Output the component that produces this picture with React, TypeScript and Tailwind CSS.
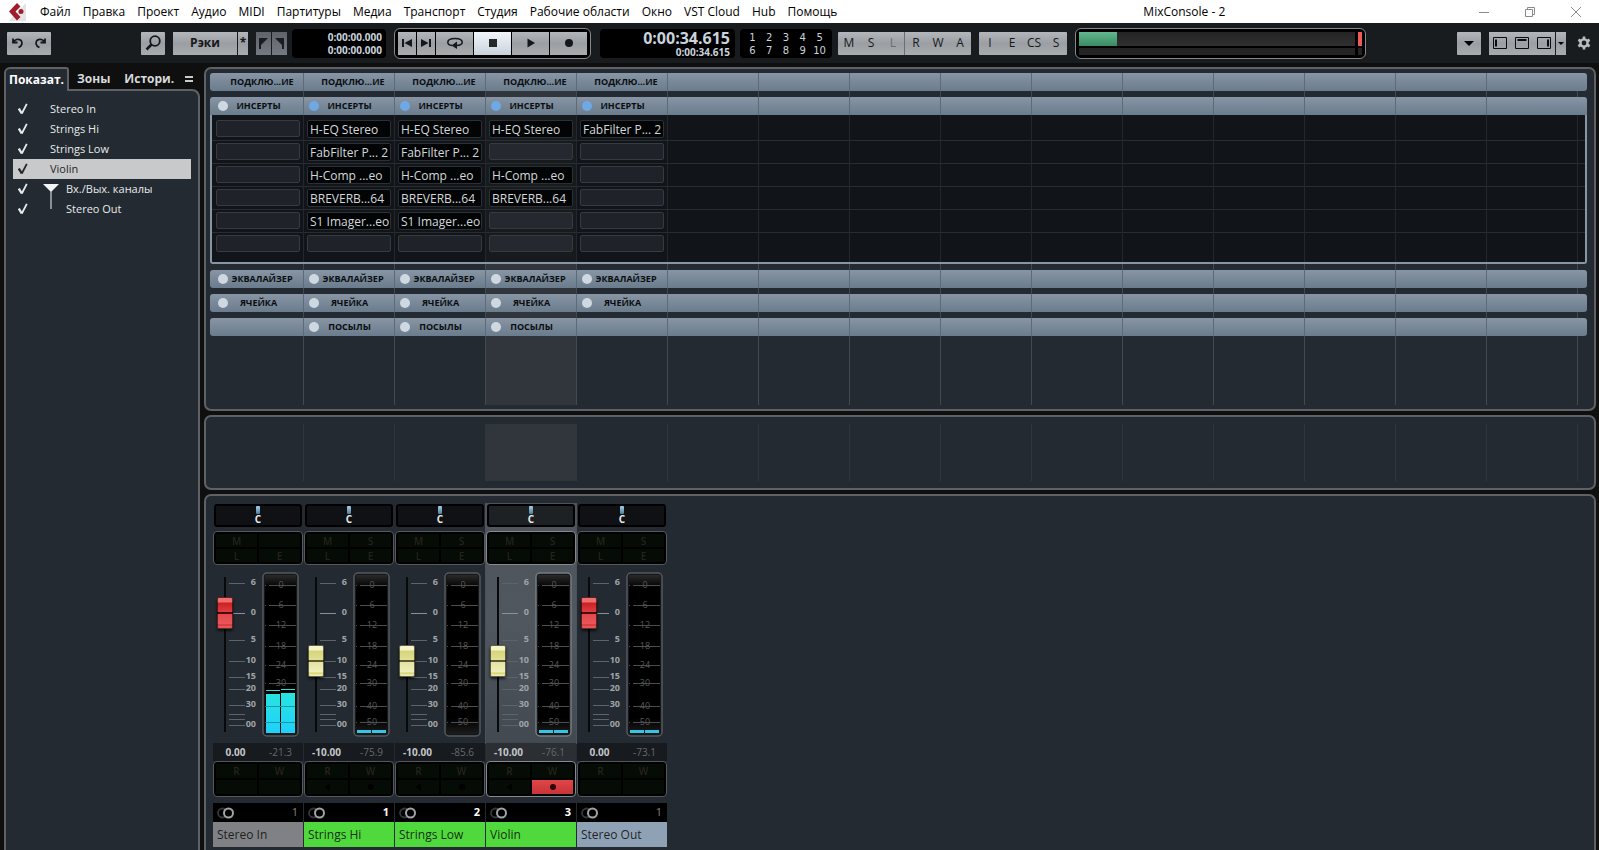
import { useState } from "react";
import type { ReactNode } from "react";

interface Channel {
  id: string;
  name: string;
  number: number;
  isIO: boolean;
  nameClass: string;
  fader: number;
  gain: string;
  peak: string;
  level: "full" | "low" | "none";
  solo: boolean;
  monitor: boolean;
  record: boolean;
  sends: boolean;
  insertsOn: boolean;
  inserts: string[];
}

const channels: Channel[] = [
  {
    id: "in", name: "Stereo In", number: 1, isIO: true, nameClass: "bg-[#7f8184]", fader: 103, gain: "0.00", peak: "-21.3",
    level: "full", solo: false, monitor: false, record: false, sends: false, insertsOn: false, inserts: ["", "", "", "", "", ""],
  },
  {
    id: "hi", name: "Strings Hi", number: 1, isIO: false, nameClass: "bg-[#50d93c]", fader: 55, gain: "-10.00", peak: "-75.9",
    level: "low", solo: true, monitor: true, record: false, sends: true, insertsOn: true,
    inserts: ["H-EQ Stereo", "FabFilter P... 2", "H-Comp ...eo", "BREVERB...64", "S1 Imager...eo", ""],
  },
  {
    id: "low", name: "Strings Low", number: 2, isIO: false, nameClass: "bg-[#50d93c]", fader: 55, gain: "-10.00", peak: "-85.6",
    level: "none", solo: true, monitor: true, record: false, sends: true, insertsOn: true,
    inserts: ["H-EQ Stereo", "FabFilter P... 2", "H-Comp ...eo", "BREVERB...64", "S1 Imager...eo", ""],
  },
  {
    id: "violin", name: "Violin", number: 3, isIO: false, nameClass: "bg-[#50d93c]", fader: 55, gain: "-10.00", peak: "-76.1",
    level: "low", solo: true, monitor: true, record: true, sends: true, insertsOn: true,
    inserts: ["H-EQ Stereo", "", "H-Comp ...eo", "BREVERB...64", "", ""],
  },
  {
    id: "out", name: "Stereo Out", number: 1, isIO: true, nameClass: "bg-[#8fa1b4]", fader: 103, gain: "0.00", peak: "-73.1",
    level: "low", solo: true, monitor: false, record: false, sends: false, insertsOn: true,
    inserts: ["FabFilter P... 2", "", "", "", "", ""],
  },
];

// rack columns, the ones without a channel stay empty
const columns: (Channel | null)[] = Array.from({ length: 15 }, (_, i) => channels[i] ?? null);
const SELECTED = 3;

const menu = [
  "Файл", "Правка", "Проект", "Аудио", "MIDI", "Партитуры", "Медиа", "Транспорт", "Студия",
  "Рабочие области", "Окно", "VST Cloud", "Hub", "Помощь",
];

const faderMarks = [
  { y: 11, label: "6" },
  { y: 41, label: "0" },
  { y: 68, label: "5" },
  { y: 89, label: "10" },
  { y: 105, label: "15" },
  { y: 117, label: "20" },
  { y: 133, label: "30" },
  { y: 142, label: "" },
  { y: 147, label: "" },
  { y: 153, label: "00" },
];

const meterMarks = [
  { y: 13, label: "0" },
  { y: 33, label: "6" },
  { y: 53, label: "12" },
  { y: 74, label: "18" },
  { y: 93, label: "24" },
  { y: 111, label: "30" },
  { y: 134, label: "40" },
  { y: 150, label: "50" },
];

const face = "bg-linear-to-b from-[#b3b7bb] via-[#9b9fa3] to-[#a9acaf] text-[#15181b]";
const barFace = "bg-linear-to-b from-[#8895a4] to-[#6a7c8d]";

const MenuBar = () => (
  <header className="flex h-[23px] items-center bg-white pl-2 text-[12px] text-black">
    <svg width="18" height="18" viewBox="0 0 18 18" aria-hidden="true">
      <path d="M1 18 L18 0 V18 Z" fill="#e3e3e3" />
      <path d="M1 8.500 L9 0 L12.500 3.500 L7.500 8.500 L12.500 14 L9 17.500 Z" fill="#a01c2c" />
      <circle cx="13" cy="8.500" r="2.500" fill="#a01c2c" />
    </svg>
    <nav className="flex gap-3 pl-[14px]">
      {menu.map((item) => (
        <button key={item} className="whitespace-nowrap">{item}</button>
      ))}
    </nav>
    <h1 className="flex-1 pl-[306px] whitespace-nowrap">MixConsole - 2</h1>
    <div className="flex gap-[36px] pr-[18px] text-[#8a8a8a]">
      <button aria-label="Свернуть">
        <svg width="10" height="10" viewBox="0 0 10 10" fill="none" stroke="currentColor"><path d="M0 5.500H10" /></svg>
      </button>
      <button aria-label="Развернуть">
        <svg width="10" height="10" viewBox="0 0 10 10" fill="none" stroke="currentColor"><path d="M.5 2.500H7.500V9.500H.5ZM2.500 2.500V.5H9.500V7.500H7.500" /></svg>
      </button>
      <button aria-label="Закрыть">
        <svg width="10" height="10" viewBox="0 0 10 10" fill="none" stroke="currentColor"><path d="M0 0L10 10M10 0L0 10" /></svg>
      </button>
    </div>
  </header>
);

const ToolButton = ({ label, className, children }: { label?: string; className: string; children: ReactNode }) => (
  <button aria-label={label} className={`flex h-[23px] items-center justify-center ${className}`}>
    {children}
  </button>
);

const Transport = () => (
  <div className="ml-2 flex h-[31px] items-center gap-px rounded-[6px] border border-[#85888b] bg-black px-[3px]">
    <ToolButton label="К началу" className={`w-[18px] ${face}`}>
      <svg width="12" height="10" viewBox="0 0 12 10" fill="currentColor"><path d="M1 1H3V9H1ZM11 1V9L3.500 5Z" /></svg>
    </ToolButton>
    <ToolButton label="К концу" className={`w-[18px] ${face}`}>
      <svg width="12" height="10" viewBox="0 0 12 10" fill="currentColor"><path d="M9 1H11V9H9ZM1 1V9L8.500 5Z" /></svg>
    </ToolButton>
    <ToolButton label="Цикл" className={`w-[37px] ${face}`}>
      <svg width="18" height="12" viewBox="0 0 18 12">
        <path d="M6 8.500C3.500 8.200 1.800 7 1.800 5.300C1.800 3 5 1.500 9 1.500S16.200 3 16.200 5.300C16.200 7 14 8.400 10.500 8.600" fill="none" stroke="currentColor" strokeWidth="1.500" />
        <path d="M11 4.500V12L5.500 8.400Z" fill="currentColor" />
      </svg>
    </ToolButton>
    <ToolButton label="Стоп" className="w-[37px] bg-linear-to-b from-[#f2f6fb] to-[#c9d2dc] text-[#25282b]">
      <span className="size-2 bg-current" />
    </ToolButton>
    <ToolButton label="Пуск" className={`w-[37px] ${face}`}>
      <svg width="8" height="10" viewBox="0 0 8 10" fill="currentColor"><path d="M.5 .5L8 5L.5 9.500Z" /></svg>
    </ToolButton>
    <ToolButton label="Запись" className={`w-[37px] ${face}`}>
      <span className="size-2 rounded-full bg-current" />
    </ToolButton>
  </div>
);

const Toolbar = () => (
  <div className="flex h-10 items-center bg-[#181c1f] pr-2 pl-[7px] text-[12px]">
    <div className={`flex rounded-[1px] ${face}`}>
      <ToolButton label="Отменить" className="w-[22px]">
        <svg width="12" height="12" viewBox="0 0 12 12" fill="none" stroke="currentColor" strokeWidth="1.800">
          <path d="M1 1.500V5.500H5.500M1.500 5C3 2.500 6 1.500 8.500 3C11 4.800 10.500 9 6.500 10.500" />
        </svg>
      </ToolButton>
      <ToolButton label="Повторить" className="w-[22px]">
        <svg width="12" height="12" viewBox="0 0 12 12" fill="none" stroke="currentColor" strokeWidth="1.800">
          <path d="M11 1.500V5.500H6.500M10.500 5C9 2.500 6 1.500 3.500 3C1 4.800 1.500 9 5.500 10.500" />
        </svg>
      </ToolButton>
    </div>
    <ToolButton label="Поиск" className={`ml-[90px] w-6 rounded-[1px] ${face}`}>
      <svg width="16" height="16" viewBox="0 0 16 16" fill="none" stroke="currentColor">
        <circle cx="10" cy="6" r="4.800" strokeWidth="1.800" />
        <path d="M6.500 9.500L1.500 14.500" strokeWidth="2.500" />
      </svg>
    </ToolButton>
    <div className="ml-2 flex gap-px">
      <ToolButton className={`w-16 font-bold ${face}`}>Рэки</ToolButton>
      <ToolButton className={`w-[10px] font-bold ${face}`}>*</ToolButton>
    </div>
    <div className="ml-2 flex gap-px">
      <ToolButton label="Левый угол" className="w-[15px] bg-linear-to-b from-[#5f646b] to-[#757a82]">
        <svg width="9" height="11" viewBox="0 0 9 11" fill="#1a1c1f"><path d="M0 0H9L2 7V11H0Z" /></svg>
      </ToolButton>
      <ToolButton label="Правый угол" className="w-[15px] bg-linear-to-b from-[#5f646b] to-[#757a82]">
        <svg width="9" height="11" viewBox="0 0 9 11" fill="#1a1c1f"><path d="M9 0H0L7 7V11H9Z" /></svg>
      </ToolButton>
    </div>
    <div className="ml-[5px] flex h-[29px] w-[94px] flex-col items-end justify-center rounded-[4px] bg-black pt-[2px] pr-1 text-[10px] leading-[13px] font-bold text-[#c9d3dc]">
      <span>0:00:00.000</span>
      <span>0:00:00.000</span>
    </div>
    <Transport />
    <div className="ml-[9px] flex h-[29px] w-[135px] flex-col items-end justify-center rounded-[4px] bg-black pt-px pr-[5px] font-bold text-[#c9d3dc]">
      <span className="text-[16px] leading-[16px]">0:00:34.615</span>
      <span className="text-[10px] leading-[12px]">0:00:34.615</span>
    </div>
    <div className="ml-[5px] grid h-[29px] w-[92px] grid-cols-5 rounded-[4px] bg-black px-1 pt-[2px] font-['DejaVu_Sans'] text-[10px] leading-[13px] text-[#c9d3dc]">
      {Array.from({ length: 10 }, (_, i) => (
        <button key={i}>{i + 1}</button>
      ))}
    </div>
    <div className={`ml-[6px] flex rounded-[1px] ${face}`}>
      {["M", "S", "L"].map((l) => (
        <ToolButton key={l} className={`w-[22px] ${l === "L" ? "text-[#6a6e72]" : ""}`}>{l}</ToolButton>
      ))}
      <span className="w-px bg-[#6a6e72]" />
      {["R", "W", "A"].map((l) => (
        <ToolButton key={l} className="w-[22px]">{l}</ToolButton>
      ))}
    </div>
    <div className={`ml-2 flex rounded-[1px] ${face}`}>
      {["I", "E", "CS", "S"].map((l) => (
        <ToolButton key={l} className="w-[22px]">{l}</ToolButton>
      ))}
    </div>
    <div className="ml-2 flex h-[31px] w-[291px] flex-col justify-center gap-[2px] rounded-[6px] border border-[#85888b] bg-black px-[3px]">
      <div className="flex h-[14px] gap-[3px]">
        <div className="flex-1 bg-linear-to-b from-[#242424] to-[#303030]">
          <div className="h-full w-[38px] bg-linear-to-b from-[#63b890] to-[#3a8a62]" />
        </div>
        <div className="w-1 bg-[#ec5a5a]" />
      </div>
      <div className="flex h-[7px] gap-[3px]">
        <div className="flex-1 bg-[#242424]" />
        <div className="w-1 bg-[#242424]" />
      </div>
    </div>
    <div className="ml-auto flex items-center">
      <ToolButton label="Профили" className={`w-6 rounded-[1px] ${face}`}>
        <svg width="10" height="5" viewBox="0 0 10 5"><path d="M0 0H10L5 5Z" fill="#000" /></svg>
      </ToolButton>
      <div className="ml-2 flex gap-px">
        <div className={`flex ${face}`}>
          {["M3 2.500V9.500", "M2.500 3H11.500", "M11 2.500V9.500"].map((d, i) => (
            <ToolButton key={d} label={`Зона ${i + 1}`} className="w-[22px]">
              <svg width="14" height="12" viewBox="0 0 14 12" fill="none" stroke="#0b0c0d">
                <path d="M.5 .5H13.500V11.500H.5Z" />
                <path d={d} strokeWidth="2" />
              </svg>
            </ToolButton>
          ))}
        </div>
        <ToolButton label="Вид окна" className={`w-[10px] ${face}`}>
          <svg width="6" height="3" viewBox="0 0 6 3"><path d="M0 0H6L3 3Z" fill="#000" /></svg>
        </ToolButton>
      </div>
      <button aria-label="Настройки" className="ml-[11px]">
        <svg width="14" height="14" viewBox="0 0 14 14" fill="none" stroke="#b9bcbf">
          <circle cx="7" cy="7" r="3.600" strokeWidth="2.400" />
          <path d="M7 .5V3M7 11V13.500M1.370 3.750L3.540 5M10.460 9L12.630 10.250M1.370 10.250L3.540 9M10.460 5L12.630 3.750" strokeWidth="2.600" />
        </svg>
      </button>
    </div>
  </div>
);

const Tick = () => (
  <svg width="10" height="12" viewBox="0 0 10 12" fill="none" stroke="currentColor" strokeLinejoin="round" aria-hidden="true">
    <path d="M.8 5.500L3.800 10.500" strokeWidth="2.400" />
    <path d="M3.800 10.500L8.800 .8" strokeWidth="1.800" />
  </svg>
);

const Sidebar = () => {
  const [selected, setSelected] = useState("Violin");
  const items = ["Stereo In", "Strings Hi", "Strings Low", "Violin", "Вх./Вых. каналы", "Stereo Out"];

  return (
    <aside className="flex w-[196px] shrink-0 flex-col">
      <div className="flex h-6 text-[12px] font-bold text-[#d8dadc]">
        <button className="relative z-10 w-[65px] rounded-tl-[6px] rounded-tr-[3px] border-2 border-b-0 border-[#5e6265] bg-[#232a31] text-white">
          Показат.
        </button>
        <button className="ml-2">Зоны</button>
        <button className="ml-[14px]">Истори.</button>
        <button aria-label="Меню вкладок" className="mr-[7px] ml-auto">
          <svg width="8" height="8" viewBox="0 0 8 8" fill="none" stroke="#c9cbcd" strokeWidth="2"><path d="M0 2H8M0 6H8" /></svg>
        </button>
      </div>
      <div className="-mt-[2px] flex-1 rounded-tr-[8px] border-2 border-b-0 border-[#5e6265] bg-[#232a31] px-[7px] pt-2 text-[11px]">
        <ul>
          {items.map((item, i) => (
            <li key={item}>
              <button
                onClick={() => setSelected(item)}
                className={`flex h-5 w-full items-center pl-[5px] text-left ${selected === item ? "bg-[#c8c9ca] text-[#25282b]" : "text-[#e8eaec]"}`}
              >
                <Tick />
                {i < 4 && <span className="pl-[22px]">{item}</span>}
                {i >= 4 && (
                  <>
                    <svg width="38" height="20" viewBox="0 0 38 20" aria-hidden="true">
                      {i === 4 && <path d="M15 5H31L23.500 12.500V20H22.500V12.500Z" fill="#f2f4f5" />}
                      {i === 5 && <path d="M22.500 0H23.500V10H22.500Z" fill="#f2f4f5" />}
                    </svg>
                    <span>{item}</span>
                  </>
                )}
              </button>
            </li>
          ))}
        </ul>
      </div>
    </aside>
  );
};

const cellWidth = (i: number) => (i === 0 ? "w-[94px]" : "w-[91px]");

// plain strip of the rack between two header bars
const RackGap = ({ height, line }: { height: string; line: string }) => (
  <div className={`flex overflow-hidden ${height}`}>
    {columns.map((_, i) => (
      <div key={i} className={`shrink-0 border-r ${line} ${cellWidth(i)} ${i === SELECTED ? "bg-[#30363c]" : ""}`} />
    ))}
  </div>
);

interface RackBarProps {
  label: string;
  wide?: boolean;
  dot: (c: Channel) => string;
  show?: (c: Channel) => boolean;
  rounded?: string;
}

const RackBar = ({ label, wide = false, dot, show = () => true, rounded = "rounded-[3px]" }: RackBarProps) => (
  <div className={`flex h-[18px] overflow-hidden ${rounded} ${barFace}`}>
    {columns.map((c, i) => (
      <div key={i} className={`flex shrink-0 justify-end border-r ${i === 14 ? "border-transparent" : "border-[#5c6b7a]"} ${cellWidth(i)}`}>
        {c && show(c) && (
          <button className="flex w-[90px] items-center pl-[5px] text-[9px] font-bold text-[#0a0d10]">
            <span className={`size-[10px] shrink-0 rounded-full ${dot(c)}`} />
            <span className={`flex flex-1 justify-center whitespace-nowrap ${wide ? "pr-[7px]" : "pr-[14px]"}`}>{label}</span>
          </button>
        )}
      </div>
    ))}
  </div>
);

const Inserts = () => (
  <div className="flex h-[149px] overflow-hidden rounded-b-[3px] border-x-2 border-b-2 border-[#8796a5] bg-[#111519]">
    {columns.map((c, i) => (
      <div
        key={i}
        className={`shrink-0 border-r border-[#24282c] pt-[3px] ${i === 0 ? "w-[92px]" : "w-[91px]"} ${i === SELECTED ? "bg-[#181b1d]" : ""}`}
      >
        {Array.from({ length: 6 }, (_, row) => (
          <div key={row} className={`flex h-[23px] justify-end pt-[2px] pr-[3px] ${row < 5 ? "border-b border-[#292d31]" : ""}`}>
            {c && (
              <button
                aria-label={`${c.name}, инсерт ${row + 1}`}
                className={`w-[84px] rounded-[2px] border pl-[2px] text-left text-[12px] whitespace-nowrap ${
                  c.inserts[row]
                    ? "h-[18px] border-[#2b3034] bg-[#020405] leading-[18px] text-[#d4d8db]"
                    : `h-[17px] border-[#363a41] ${i === SELECTED ? "bg-[#25282e]" : "bg-[#1f2229]"}`
                }`}
              >
                {c.inserts[row]}
              </button>
            )}
          </div>
        ))}
      </div>
    ))}
    <div className="flex-1 pt-[3px]">
      {Array.from({ length: 5 }, (_, row) => (
        <div key={row} className="h-[23px] border-b border-[#292d31]" />
      ))}
    </div>
  </div>
);

const off = "bg-[#cfd8e1]";

const Racks = () => (
  <section className="rounded-[7px] border-2 border-[#5e6265] bg-[#232a31] py-1 pr-[7px] pl-1">
    <RackBar label="ПОДКЛЮ...ИЕ" wide dot={() => ""} />
    <RackGap height="h-[6px]" line="border-[#42494f]" />
    <RackBar label="ИНСЕРТЫ" dot={(c) => (c.insertsOn ? "bg-[#6fa8e4]" : off)} rounded="rounded-t-[3px]" />
    <Inserts />
    <RackGap height="h-[6px]" line="border-[#42494f]" />
    <RackBar label="ЭКВАЛАЙЗЕР" wide dot={() => off} />
    <RackGap height="h-[6px]" line="border-[#42494f]" />
    <RackBar label="ЯЧЕЙКА" dot={() => off} />
    <RackGap height="h-[6px]" line="border-[#42494f]" />
    <RackBar label="ПОСЫЛЫ" dot={() => off} show={(c) => c.sends} />
    <RackGap height="h-[69px]" line="border-[#42494f]" />
  </section>
);

const Fader = ({ channel }: { channel: Channel }) => {
  const [value, setValue] = useState(channel.fader);
  const thumb = channel.isIO
    ? "[&::-webkit-slider-thumb]:bg-[linear-gradient(#ef6e6e_0px,#ef6e6e_4px,#c92226_5px,#e03c40_14px,#4a0c0d_14px,#4a0c0d_16px,#e4484b_16px,#ec5658_26px,#b93033_27px,#ea5457_28px)]"
    : "[&::-webkit-slider-thumb]:bg-[linear-gradient(#f6f5c8_0px,#f6f5c8_4px,#d6d47a_5px,#e2e094_14px,#5a5934_14px,#5a5934_16px,#e4e3a2_16px,#f0efbc_26px,#d3d06a_27px,#efedb0_29px)]";

  return (
    <div className="relative h-[165px] w-[49px]">
      <svg width="49" height="165" viewBox="0 0 49 165" aria-hidden="true">
        <rect x="11" y="5" width="2" height="155" fill="#07090a" />
        {faderMarks.map((m) => (
          <g key={m.y}>
            <rect x="16" y={m.y} width="16" height="1" fill={m.label === "0" ? "#8c9195" : "#5d6369"} />
            <text x="43" y={m.y + 2} textAnchor="end" className="fill-[#a0a4a8] text-[9px] font-bold">{m.label}</text>
          </g>
        ))}
      </svg>
      <input
        type="range"
        min={0}
        max={123}
        value={value}
        onChange={(e) => setValue(Number(e.target.value))}
        aria-label={`Громкость ${channel.name}`}
        className={`absolute top-[5px] left-1 h-[155px] w-4 appearance-none bg-transparent [direction:rtl] [writing-mode:vertical-lr] [&::-webkit-slider-thumb]:h-8 [&::-webkit-slider-thumb]:w-4 [&::-webkit-slider-thumb]:appearance-none [&::-webkit-slider-thumb]:rounded-[2px] [&::-webkit-slider-thumb]:border [&::-webkit-slider-thumb]:border-black/60 [&::-webkit-slider-thumb]:shadow-[0_2px_3px_#000a] ${thumb}`}
      />
    </div>
  );
};

const Meter = ({ channel, selected }: { channel: Channel; selected: boolean }) => (
  <svg width="37" height="165" viewBox="0 0 37 165" role="img" aria-label={`Уровень ${channel.name}`}>
    <defs>
      <linearGradient id={`top-${channel.id}`} x1="0" y1="0" x2="0" y2="1">
        <stop offset="0" stopColor="#2a2a2a" />
        <stop offset="0.080" stopColor="#000" />
        <stop offset="0.900" stopColor="#000" />
        <stop offset="1" stopColor="#1c1c1c" />
      </linearGradient>
      <linearGradient id={`level-${channel.id}`} x1="0" y1="0" x2="0" y2="1">
        <stop offset="0" stopColor="#28e4e0" />
        <stop offset="1" stopColor="#1fd0fb" />
      </linearGradient>
    </defs>
    <rect x="1" y="1" width="35" height="163" rx="4" fill="#15181a" stroke={selected ? "#777c81" : "#565a5e"} strokeWidth="1.500" />
    <rect x="3" y="3" width="31" height="159" fill={`url(#top-${channel.id})`} />
    {channel.level === "full" && (
      <>
        <rect x="4" y="118" width="14" height="1" fill="#28e4e0" />
        <rect x="19" y="117" width="14" height="1" fill="#28e4e0" />
        <rect x="4" y="122" width="14" height="39" fill={`url(#level-${channel.id})`} />
        <rect x="19" y="121" width="14" height="40" fill={`url(#level-${channel.id})`} />
      </>
    )}
    {channel.level === "low" && (
      <>
        <rect x="4" y="158" width="14" height="3" fill="#36c3e6" />
        <rect x="19" y="158" width="14" height="3" fill="#36c3e6" />
      </>
    )}
    {meterMarks.map((m) => {
      const covered = channel.level === "full" && m.y > 120;
      return (
        <g key={m.y}>
          <rect x="3" y={m.y} width="1" height="1" fill="#4d4d4d" />
          <rect x={covered ? 4 : 7} y={m.y} width={covered ? 29 : 27} height="1" fill={covered ? "#1697a6" : "#4d4d4d"} />
          {!covered && (
            <text x="19" y={m.y + 3} textAnchor="middle" className="fill-[#56585a] text-[9px]">{m.label}</text>
          )}
        </g>
      );
    })}
  </svg>
);

const pad = "flex items-center justify-center bg-[#050b05] text-[10px] leading-[10px] font-semibold text-[#24241a]";

const Strip = ({ channel, selected }: { channel: Channel; selected: boolean }) => {
  const frame = `grid grid-cols-2 grid-rows-2 gap-[2px] rounded-[4px] border bg-black p-[2px] ${selected ? "border-[#85898d]" : "border-[#55595d]"}`;

  return (
    <article className="flex w-[90px] flex-col">
      <div className={`flex flex-col ${selected ? "bg-linear-to-b from-[#4d545b] via-[#50575e] to-[#424950] outline outline-[#4b5259]" : ""}`}>
        <button
          aria-label={`Панорама ${channel.name}`}
          className={`mx-px flex h-[23px] flex-col items-center rounded-[3px] border-2 border-black text-[10px] leading-[10px] font-bold text-[#e8ecef] ${selected ? "bg-[#1d2123]" : "bg-[#0f1114]"}`}
        >
          <span className="h-2 w-1 rounded-[1px] bg-linear-to-b from-[#a4cfe6] to-[#4d7f98]" />
          <span>C</span>
        </button>
        <div className={`mt-1 h-[34px] ${frame}`}>
          <button className={pad}>M</button>
          {channel.solo ? <button className={pad}>S</button> : <span className={pad} />}
          <button className={pad}>L</button>
          <button className={pad}>E</button>
        </div>
        <div className="mt-[7px] mb-[6px] flex">
          <Fader channel={channel} />
          <Meter channel={channel} selected={selected} />
        </div>
      </div>
      <div className={`grid h-[18px] grid-cols-2 items-center text-center text-[10px] ${selected ? "bg-[#2b2e32]" : "bg-[#171a1e]"}`}>
        <span className="font-bold text-[#c4c7ca]">{channel.gain}</span>
        <span className="text-[#65696d]">{channel.peak}</span>
      </div>
      <div className={`h-9 ${frame}`}>
        <button className={pad}>R</button>
        <button className={pad}>W</button>
        <button aria-label="Мониторинг" className={pad}>
          {channel.monitor && <svg width="5" height="8" viewBox="0 0 5 8"><path d="M5 0V8L0 4Z" fill="#000" /></svg>}
        </button>
        <button aria-label="Запись" className={channel.record ? "flex items-center justify-center bg-linear-to-b from-[#e04648] to-[#c83438]" : pad}>
          {channel.monitor && <span className={`size-[6px] rounded-full ${channel.record ? "bg-[#2a0a0b]" : "bg-black"}`} />}
        </button>
      </div>
      <div className="mt-[6px] flex h-[19px] items-center justify-between bg-black pr-[5px] pl-1 text-[11px]">
        <svg width="17" height="12" viewBox="0 0 17 12" fill="none" aria-hidden="true">
          <circle cx="5.500" cy="6" r="4.500" stroke="#35383a" strokeWidth="1.800" />
          <circle cx="11.500" cy="6" r="4.500" fill="#000" stroke="#a2a4a6" strokeWidth="2" />
        </svg>
        <span className={channel.isIO ? "text-[#8a8480]" : "font-bold text-white"}>{channel.number}</span>
      </div>
      <h2 className={`flex h-[25px] items-center pl-1 text-[12px] text-[#111]/90 ${channel.nameClass}`}>{channel.name}</h2>
    </article>
  );
};

const App = () => {
  return (
    <div className="flex min-h-screen flex-col bg-[#0f0f0f] font-['Open_Sans','Noto_Sans',sans-serif]">
      <MenuBar />
      <Toolbar />
      <div className="flex flex-1 gap-1 pt-1 pr-[3px] pl-1">
        <Sidebar />
        <main className="flex min-w-0 flex-1 flex-col gap-1">
          <Racks />
          <section className="rounded-[7px] border-2 border-[#5e6265] bg-[#232a31] py-[7px] pr-[7px] pl-1">
            <RackGap height="h-[57px]" line="border-[#30363c]" />
          </section>
          <section className="flex flex-1 items-start gap-px rounded-t-[7px] border-2 border-b-0 border-[#5e6265] bg-[#232a31] pt-2 pb-[3px] pl-[7px]">
            {channels.map((c, i) => (
              <Strip key={c.id} channel={c} selected={i === SELECTED} />
            ))}
          </section>
        </main>
      </div>
    </div>
  );
};

export default App;
